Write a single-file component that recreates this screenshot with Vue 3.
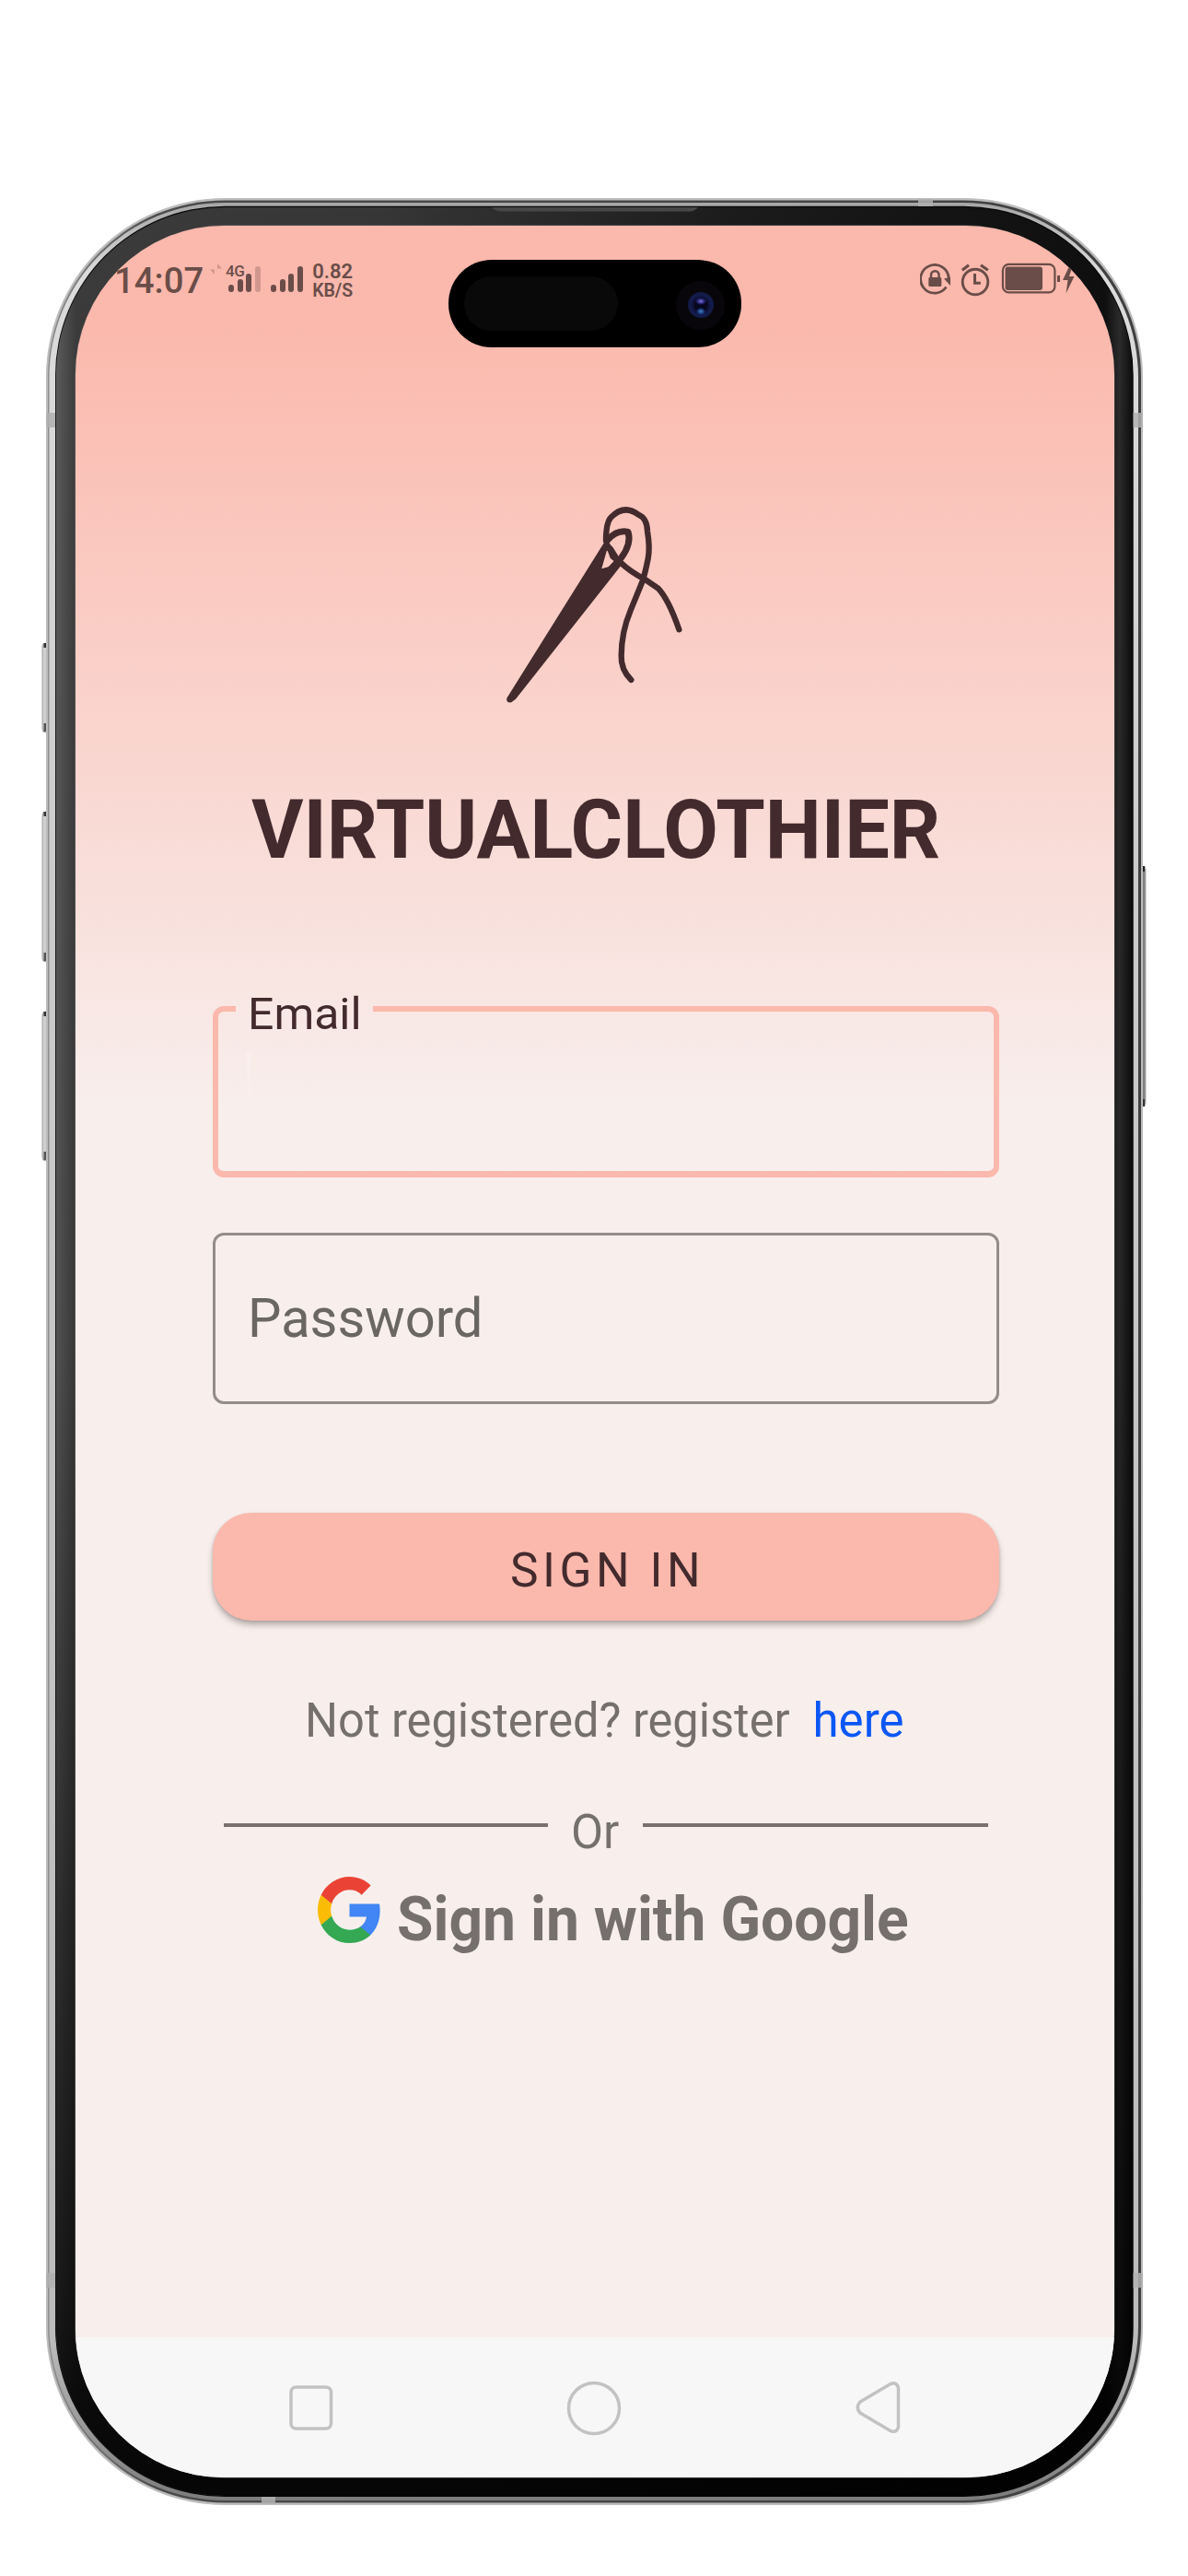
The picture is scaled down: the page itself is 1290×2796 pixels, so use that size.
<script setup>
const signalA = [8, 14, 20, 28]
const signalB = [8, 14, 20, 28]
const antennas = [
  { x: 50, y: 448, w: 10, h: 16 },
  { x: 1230.5, y: 448, w: 10.5, h: 16 },
  { x: 50, y: 2467, w: 10, h: 16 },
  { x: 1230.5, y: 2467, w: 10.5, h: 16 },
  { x: 997, y: 216, w: 16, h: 8 },
  { x: 284, y: 2710, w: 15, h: 8 },
]
const leftKeys = [
  { y: 698, h: 97 },
  { y: 881, h: 163 },
  { y: 1098, h: 162 },
]
</script>

<template>
  <main class="page">
    <svg class="device" width="1290" height="2796" viewBox="0 0 1290 2796" aria-hidden="true">
      <defs>
        <linearGradient id="bezel" x1="0" y1="0" x2="1" y2="0">
          <stop offset="0" stop-color="#5c5c5c" />
          <stop offset="0.019" stop-color="#3b3b3b" />
          <stop offset="0.3" stop-color="#363636" />
          <stop offset="0.65" stop-color="#1a1a1a" />
          <stop offset="0.975" stop-color="#0f0f0f" />
          <stop offset="0.988" stop-color="#2b2b2b" />
          <stop offset="1" stop-color="#0c0c0c" />
        </linearGradient>
        <linearGradient id="shade" x1="0" y1="0" x2="0" y2="1">
          <stop offset="0" stop-color="#000" stop-opacity="0" />
          <stop offset="0.5" stop-color="#000" stop-opacity="0.1" />
          <stop offset="0.9" stop-color="#000" stop-opacity="0.7" />
          <stop offset="1" stop-color="#000" stop-opacity="0.9" />
        </linearGradient>
        <linearGradient id="ringDark" x1="0" y1="0" x2="1" y2="0">
          <stop offset="0" stop-color="#8f8f8f" />
          <stop offset="0.1" stop-color="#4a4a4a" />
          <stop offset="1" stop-color="#404040" />
        </linearGradient>
        <linearGradient id="ringLight" x1="0" y1="0" x2="0" y2="1">
          <stop offset="0" stop-color="#a6a6a6" />
          <stop offset="0.03" stop-color="#dcdcdc" />
          <stop offset="0.3" stop-color="#cbcbcb" />
          <stop offset="0.93" stop-color="#bcbcbc" />
          <stop offset="1" stop-color="#7c7c7c" />
        </linearGradient>
      </defs>
      <g v-for="k in leftKeys" :key="k.y">
        <rect x="46" :y="k.y" width="8" :height="k.h" rx="4" fill="#cfcfcf" stroke="#a0a0a0" />
        <rect x="47.5" :y="k.y" width="2.500" height="5" fill="#333" />
        <rect x="47.5" :y="k.y + k.h - 10" width="2.500" height="9" fill="#555" />
      </g>
      <rect x="1237" y="940" width="7" height="261" rx="3.500" fill="#808080" stroke="#b5b5b5" />
      <rect x="1240" y="940" width="3" height="6" fill="#222" />
      <rect x="1240" y="1193" width="3" height="8" fill="#333" />
      <rect x="50" y="215" width="1191" height="2504" rx="194" fill="#bdbdbd" />
      <rect x="52" y="217.500" width="1187" height="2499" rx="192" fill="url(#ringDark)" />
      <rect x="53.500" y="220" width="1182.500" height="2494" rx="190" fill="url(#ringLight)" />
      <rect x="60" y="223.700" width="1170.700" height="2486.300" rx="184" fill="#050505" />
      <rect x="60.800" y="225" width="1169" height="2484" rx="183" fill="url(#bezel)" />
      <rect x="60.800" y="225" width="1169" height="2484" rx="183" fill="url(#shade)" />
      <rect x="81" y="244" width="1129.500" height="2446" rx="164" fill="#777" opacity="0.45" />
      <path d="M534 225h224q-4 4.500-9 4.500H544q-6 0-10-4.500z" fill="#474747" />
      <rect v-for="a in antennas" :key="a.x + '-' + a.y" :x="a.x" :y="a.y" :width="a.w" :height="a.h" fill="#b0b0b0" opacity="0.85" />
    </svg>

    <section class="screen">
      <header class="status">
        <span class="clock"><span class="fit fit-clock">14:07</span></span>
        <svg class="data" width="13" height="12" viewBox="0 0 13 12" aria-hidden="true">
          <path d="M5 0v12L0 6.500H5zM8 12V0l5 5.500H8z" fill="#6a4d48" />
        </svg>
        <span class="net">4G</span>
        <span class="bars bars-a"><i v-for="(h, n) in signalA" :key="n" :style="{ height: h + 'px' }" /></span>
        <span class="bars"><i v-for="(h, n) in signalB" :key="n" :style="{ height: h + 'px' }" /></span>
        <span class="speed"><span class="speed-n">0.82</span><span class="speed-u">KB/S</span></span>
        <svg class="icons" width="172" height="40" viewBox="0 0 172 40" fill="none" stroke="#6a4d48" aria-hidden="true">
          <path d="M28.500 27.500A15.300 15.300 0 1 1 31.200 19" stroke-width="2.800" />
          <path d="M26 18.500l7-1.500v9z" fill="#6a4d48" stroke="none" />
          <rect x="9.300" y="17" width="14" height="10" rx="1.500" fill="#6a4d48" stroke="none" />
          <path d="M12 18v-3.500a4.300 4.300 0 0 1 8.600 0V18" stroke-width="2.500" />
          <circle cx="60" cy="22" r="13.800" stroke-width="2.900" />
          <path d="M59.500 13v10.300h6.300" stroke-width="3" />
          <path d="M45.800 9.300L53 3.800M66 3.800l7.800 5.500" stroke-width="3.200" />
          <rect x="89.900" y="2.900" width="56.500" height="30.500" rx="6.500" stroke-width="2.200" />
          <rect x="92.500" y="5.500" width="40.500" height="25.500" rx="3" fill="#6a4d48" stroke="none" />
          <rect x="149" y="15" width="3" height="7" fill="#6a4d48" stroke="none" />
          <path d="M163.500 2L155 20h5.500l-2 14.500L167.500 16h-5.500l4.500-14z" fill="#6a4d48" stroke="none" />
        </svg>
        <div class="island">
          <span class="sensor" />
          <span class="lens"><span class="glass" /></span>
        </div>
      </header>

      <svg class="logo" width="250" height="250" viewBox="0 0 750 750" fill="none" stroke="#432a2d" stroke-linecap="round" stroke-linejoin="round" aria-hidden="true">
        <path d="M411 172L91 683Q88 700 106 697L120 686L468 245L400 262L416 205L428 190z" fill="#432a2d" stroke="none" />
        <path d="M420 168Q450 134 486 142Q498 180 464 226" stroke-width="21" />
        <path d="M452 232L470 240L400 325L370 290L398 264L422 256L446 230z" fill="#432a2d" stroke="none" />
        <path d="M414 170Q414 112 430 95Q473 50 520 86Q548 98 549 140Q558 192 551 230Q543 270 534 300L494 398Q464 470 464 545Q462 590 496 624" stroke-width="19" />
        <path d="M418 184Q430 200 436 222L460 240Q490 270 540 296L584 326Q618 362 652 460" stroke-width="19" />
        <path d="M428 198L448 230" stroke-width="21" />
      </svg>

      <h1 class="title"><span class="fit fit-title">VIRTUALCLOTHIER</span></h1>

      <form class="form" @submit.prevent>
        <fieldset class="field email">
          <legend><span class="fit fit-email">Email</span></legend>
          <span class="caret" />
        </fieldset>
        <div class="field password"><span class="fit fit-pass">Password</span></div>
        <button class="submit"><span class="fit fit-sign">SIGN IN</span></button>
      </form>

      <p class="register">
        <span class="reg"><span class="fit fit-reg">Not registered? register</span></span>
        <a class="here">here</a>
      </p>

      <div class="or"><hr class="l"><span class="fit-or">Or</span><hr class="r"></div>

      <div class="google">
        <svg width="69" height="72" viewBox="2 2 44 44" preserveAspectRatio="none" aria-hidden="true">
          <path fill="#4285F4" d="M45.120 24.500c0-1.560-.14-3.060-.4-4.500H24v8.510h11.840c-.51 2.750-2.060 5.080-4.390 6.640v5.520h7.110c4.160-3.830 6.560-9.470 6.560-16.170z" />
          <path fill="#34A853" d="M24 46c5.940 0 10.920-1.970 14.560-5.330l-7.110-5.520c-1.970 1.320-4.490 2.100-7.450 2.100-5.730 0-10.580-3.870-12.310-9.070H4.340v5.700C7.960 41.070 15.400 46 24 46z" />
          <path fill="#FBBC05" d="M11.690 28.180C11.250 26.860 11 25.450 11 24s.25-2.860.69-4.180v-5.700H4.340A21.990 21.990 0 0 0 2 24c0 3.550.85 6.910 2.340 9.880l7.350-5.700z" />
          <path fill="#EA4335" d="M24 10.750c3.230 0 6.130 1.110 8.410 3.290l6.310-6.310C34.910 4.180 29.930 2 24 2 15.400 2 7.960 6.930 4.340 14.120l7.350 5.700c1.730-5.200 6.580-9.070 12.310-9.070z" />
        </svg>
        <span class="fit fit-google">Sign in with Google</span>
      </div>

      <nav class="nav">
        <svg width="1127" height="152" viewBox="82 2537 1127 152" fill="none" stroke="#c2c2c2" stroke-width="3.500" stroke-linejoin="round" aria-hidden="true">
          <rect x="316" y="2591" width="43.500" height="45" rx="5.500" />
          <circle cx="645" cy="2614" r="27.500" />
          <path d="M967 2587.500L934 2607Q928.500 2613 934 2619L967 2638.500Q974 2641 975.500 2634V2592Q974 2585 967 2587.500z" />
        </svg>
      </nav>
    </section>
  </main>
</template>

<style>
body {
  margin: 0;
  background: #fff;
}
</style>

<style scoped>
.page {
  position: relative;
  width: 1290px;
  height: 2796px;
  overflow: hidden;
  background: #fff;
  font-family: Roboto, "Liberation Sans", sans-serif;
  box-sizing: border-box;
  padding: 245px 80.500px 107px 82px;
}
.device {
  position: absolute;
  left: 0;
  top: 0;
}
.screen {
  position: relative;
  height: 2444px;
  display: flex;
  flex-direction: column;
  overflow: hidden;
  border-radius: 161px;
  background: linear-gradient(#fbb8ac 0, #fbb8ac 95px, #f8eeec 955px, #f8efed 1060px, #f8efed 100%);
}
.fit {
  display: inline-block;
  white-space: pre;
  transform-origin: 0 50%;
}
.status {
  position: relative;
  display: flex;
  align-items: flex-start;
  height: 119px;
  color: #6a4d48;
  font-weight: 500;
}
.clock {
  width: 98px;
  margin-left: 42px;
  font-size: 39.500px;
  line-height: 119px;
}
.fit-clock {
  transform: scaleX(0.97);
}
.data {
  margin: 41px 0 0 6px;
  opacity: 0.3;
}
.net {
  width: 20px;
  margin: 39px 0 0 4px;
  font-size: 17px;
  line-height: 20px;
  letter-spacing: -0.500px;
}
.bars {
  display: flex;
  align-items: flex-end;
  gap: 3.700px;
  height: 28px;
  margin: 44px 0 0 11px;
}
.bars i {
  width: 6px;
  border-radius: 3px;
  background: #6a4d48;
}
.bars-a {
  margin-left: -17px;
}
.bars-a i:last-child {
  opacity: 0.3;
}
.speed {
  display: flex;
  flex-direction: column;
  margin: 39px 0 0 10px;
  font-size: 22px;
  line-height: 22px;
  font-weight: 600;
}
.speed-u {
  font-size: 19.500px;
  line-height: 19px;
}
.icons {
  position: absolute;
  left: 917px;
  top: 38.500px;
}
.island {
  position: absolute;
  left: 405px;
  top: 37px;
  width: 318px;
  height: 94.500px;
  box-sizing: border-box;
  display: flex;
  align-items: center;
  justify-content: space-between;
  padding: 0 18px 0 17px;
  border-radius: 47px;
  background: #000;
}
.sensor {
  width: 167px;
  height: 59px;
  border-radius: 30px;
  background: #090909;
}
.lens {
  display: flex;
  align-items: center;
  justify-content: center;
  width: 53px;
  height: 53px;
  margin-top: 4px;
  border-radius: 50%;
  background: #08060a;
}
.glass {
  width: 28px;
  height: 28px;
  border-radius: 50%;
  background:
    radial-gradient(ellipse 6px 4px at 14px 10px, #7d75d0, #2d2880 60%, transparent),
    radial-gradient(ellipse 5px 4px at 14px 21px, #3f88b0, #1a3580 65%, transparent),
    radial-gradient(circle, #06061c 30%, #141c4c 55%, #0e163c 95%);
}
.logo {
  display: block;
  flex: none;
  margin: 166px 0 0 438px;
}
.title {
  height: 100px;
  margin: 70.600px 0 0 191px;
  color: #432a2d;
  font-size: 89px;
  line-height: 100px;
  font-weight: 700;
}
.fit-title {
  transform: scaleX(0.972);
}
.form {
  display: flex;
  flex-direction: column;
  width: 854px;
  margin: 141px 0 0 148.700px;
}
.field {
  box-sizing: border-box;
  height: 186px;
  margin: 0;
  border-radius: 12px;
}
.email {
  position: relative;
  height: 215px;
  margin-top: -29px;
  padding: 0 0 0 19px;
  border: 6px solid #fbb8ac;
  border-bottom-width: 7px;
}
.email legend {
  width: 149px;
  height: 64px;
  padding: 0 0 0 13px;
  box-sizing: border-box;
  color: #432a2d;
  font-size: 48.500px;
  line-height: 76px;
}
.fit-email {
  transform: scaleX(1.03);
}
.caret {
  display: block;
  width: 5px;
  height: 64px;
  margin: 15px 0 0 12px;
  background: linear-gradient(#f9efee, rgba(249, 239, 238, 0.2));
}
.password {
  margin-top: 60px;
  padding-left: 35px;
  border: 3px solid #938c89;
  color: #6a6664;
  font-size: 58.500px;
  line-height: 180px;
}
.fit-pass {
  transform: scaleX(0.988);
}
.submit {
  height: 117px;
  margin-top: 118px;
  padding: 0 0 0 323px;
  border: 0;
  border-radius: 42px;
  background: #fbb8ac;
  box-shadow: 0 5px 6px rgba(60, 50, 48, 0.32), 0 1px 3px rgba(60, 50, 48, 0.15);
  color: #432a2d;
  font: 400 52px/123px Roboto, sans-serif;
  text-align: left;
  letter-spacing: 4.600px;
}
.fit-sign {
  position: relative;
  top: 1px;
  transform: scaleX(0.987);
}
.register {
  display: flex;
  height: 60px;
  margin: 79px 0 0 249px;
  color: #75706e;
  font-size: 51px;
  line-height: 60px;
}
.reg {
  width: 551.500px;
}
.fit-reg {
  transform: scaleX(0.991);
}
.here {
  color: #0b57f5;
}
.or {
  display: flex;
  height: 60px;
  margin: 61px 0 0 161px;
  color: #75706e;
  font-size: 51px;
  line-height: 60px;
}
.or hr {
  height: 4px;
  margin: 20px 0 0;
  border: 0;
  background: #7a716f;
}
.or .l {
  width: 352px;
}
.or .r {
  width: 375px;
}
.fit-or {
  width: 77.500px;
  padding-left: 25px;
}
.google {
  display: flex;
  margin: 18.500px 0 0 263px;
  color: #75706e;
  font-size: 67px;
  line-height: 80px;
  font-weight: 700;
}
.google svg {
  flex: none;
}
.fit-google {
  margin: 6px 0 0 17px;
  transform: scaleX(0.957);
}
.nav {
  height: 152.500px;
  margin-top: auto;
  background: #f7f7f7;
}
.nav svg {
  display: block;
}
</style>
